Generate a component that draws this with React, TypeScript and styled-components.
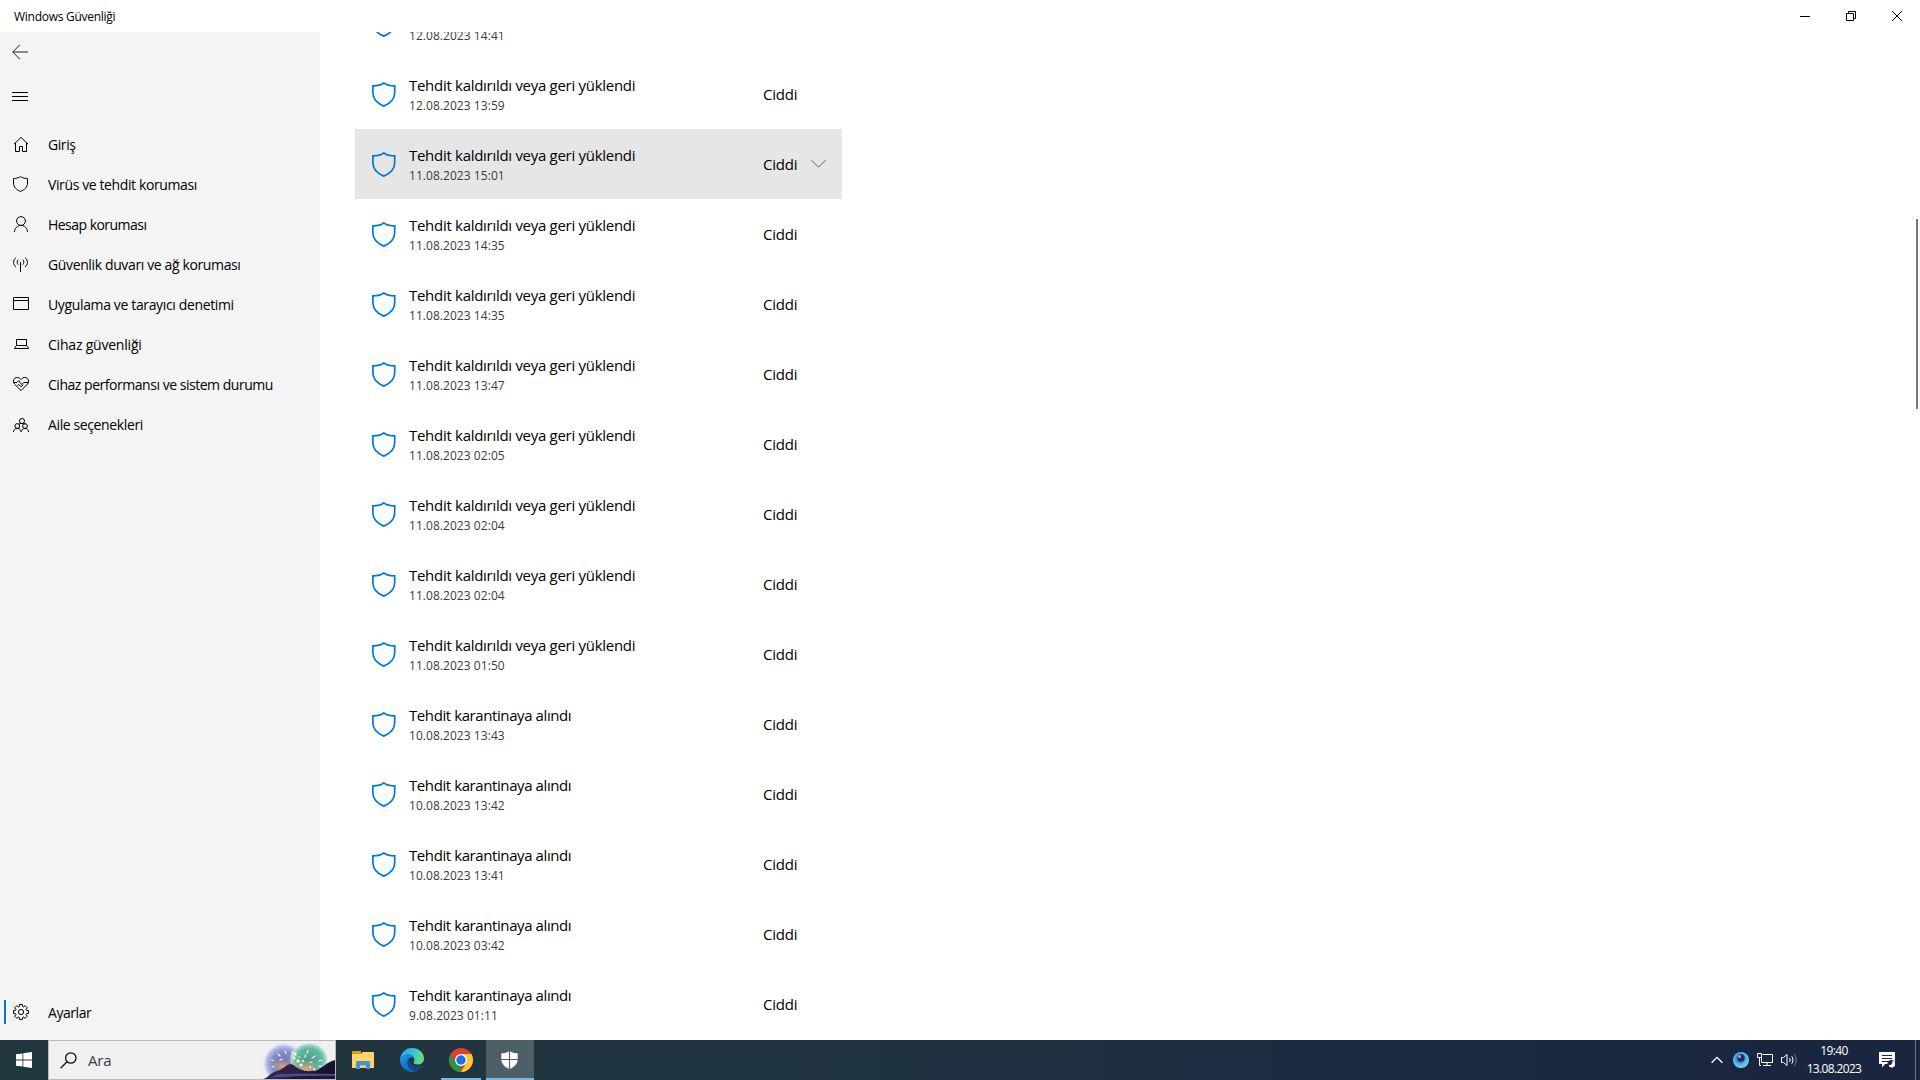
import React from "react";
import styled, { createGlobalStyle } from "styled-components";

const GlobalStyle = createGlobalStyle`
  * { box-sizing: border-box; }
  body {
    margin: 0;
    background: #fff;
    color: #000;
    font-family: "Open Sans", "Noto Sans", sans-serif;
    overflow: hidden;
  }
  svg { display: block; flex: none; }
`;

const Screen = styled.div`
  width: 1920px;
  height: 1080px;
  display: flex;
  flex-direction: column;
  background: #fff;
`;

const TitleBar = styled.header`
  height: 32px;
  flex: none;
  display: flex;
  align-items: center;
  justify-content: space-between;
  padding-left: 14px;
`;

const WindowTitle = styled.span`
  margin-top: 2px;
  font-size: 12px;
  line-height: 16px;
  letter-spacing: -0.27px;
  white-space: nowrap;
`;

const WindowButtons = styled.div`
  display: flex;
`;

const WindowButton = styled.button`
  width: 46px;
  height: 32px;
  padding: 0;
  border: 0;
  background: transparent;
  display: flex;
  align-items: center;
  justify-content: center;
`;

const Body = styled.div`
  flex: 1;
  min-height: 0;
  display: flex;
`;

const Sidebar = styled.nav`
  width: 320px;
  flex: none;
  display: flex;
  flex-direction: column;
  background: #f4f4f4;
  padding-bottom: 7px;
`;

const SidebarButton = styled.div<{ $height: number }>`
  height: ${(p) => p.$height}px;
  padding-left: 12px;
  display: flex;
  align-items: center;
`;

const NavList = styled.div`
  margin-top: 5px;
  flex: 1;
  display: flex;
  flex-direction: column;
`;

const NavRow = styled.div`
  height: 40px;
  display: flex;
  align-items: center;
`;

const NavMarker = styled.span<{ $active?: boolean }>`
  width: 2px;
  height: 24px;
  margin: 0 7px 2px 4px;
  background: ${(p) => (p.$active ? "#0078d7" : "transparent")};
`;

const NavIcon = styled.span`
  width: 16px;
  height: 16px;
  margin: 0 19px 2px 0;
`;

const NavLabel = styled.span<{ $track: number }>`
  font-size: 14px;
  line-height: 20px;
  letter-spacing: ${(p) => p.$track}px;
  white-space: nowrap;
`;

const Content = styled.main`
  flex: 1;
  min-width: 0;
  display: flex;
  justify-content: space-between;
  padding: 0 2px 0 35px;
  overflow: hidden;
`;

const ThreatList = styled.div`
  width: 487px;
  margin-top: -43px;
`;

const ThreatRow = styled.div<{ $selected: boolean }>`
  height: 70px;
  display: flex;
  align-items: center;
  padding-left: 17px;
  background: ${(p) => (p.$selected ? "#e6e6e6" : "transparent")};
`;

const ThreatText = styled.div`
  width: 354px;
  margin-left: 13px;
  display: flex;
  flex-direction: column;
`;

const ThreatTitle = styled.span<{ $track: number }>`
  font-size: 15px;
  line-height: 20px;
  letter-spacing: ${(p) => p.$track}px;
  white-space: nowrap;
`;

const ThreatDate = styled.span`
  padding-top: 3px;
  margin-bottom: -1px;
  font-size: 12px;
  line-height: 16px;
  letter-spacing: 0.05px;
  color: #3a3a3a;
  white-space: nowrap;
`;

const Severity = styled.span`
  width: 48px;
  font-size: 15px;
  line-height: 20px;
  letter-spacing: -0.2px;
`;

const ScrollThumb = styled.div`
  width: 2px;
  height: 190px;
  margin-top: 187px;
  background: #7a7a7a;
`;

const Taskbar = styled.footer`
  height: 40px;
  flex: none;
  display: flex;
  background: linear-gradient(90deg, #21373f 0%, #20343f 40%, #1b2942 75%, #1a2540 100%);
`;

const StartButton = styled.div`
  width: 48px;
  display: flex;
  align-items: center;
  justify-content: center;
`;

const SearchBox = styled.div`
  width: 288px;
  display: flex;
  align-items: center;
  background: #f0f0f0;
  border: 1px solid #b9b9b9;
  padding-left: 11px;
`;

const SearchText = styled.span`
  flex: 1;
  margin-left: 11px;
  font-size: 15px;
  line-height: 20px;
  letter-spacing: -0.2px;
  color: #3b3b3b;
`;

const Apps = styled.div`
  display: flex;
  gap: 1px;
  margin-left: 3px;
  flex: 1;
`;

const AppButton = styled.div<{ $active?: boolean }>`
  width: 48px;
  height: 40px;
  display: flex;
  flex-direction: column;
  align-items: center;
  background: ${(p) => (p.$active ? "#4d5f66" : "transparent")};
`;

const AppIcon = styled.div<{ $underlined?: boolean }>`
  flex: 1;
  display: flex;
  align-items: center;
  padding-top: ${(p) => (p.$underlined ? 2 : 0)}px;
`;

const AppUnderline = styled.div<{ $width: number }>`
  width: ${(p) => p.$width}px;
  height: 2px;
  background: #76b9ed;
`;

const Tray = styled.div`
  display: flex;
  align-items: center;
  color: #fff;
`;

const TrayItem = styled.div<{ $right: number }>`
  margin-right: ${(p) => p.$right}px;
`;

const Clock = styled.div`
  width: 60px;
  margin-right: 15px;
  display: flex;
  flex-direction: column;
  align-items: center;
  font-size: 12px;
  line-height: 18px;
  letter-spacing: -0.65px;
  white-space: nowrap;
`;

const ShowDesktop = styled.div`
  width: 5px;
  height: 40px;
  border-left: 1px solid #6b7487;
`;

const Line = ({ children }: { children: React.ReactNode }) => (
  <svg width="16" height="16" viewBox="0 0 16 16" fill="none" stroke="#000" strokeWidth="1">
    {children}
  </svg>
);

const gearPath = (() => {
  const pts: string[] = [];
  for (let i = 0; i < 8; i++) {
    const a = (i * Math.PI) / 4;
    const at = (r: number, d: number) =>
      `${(8 + r * Math.sin(a + d)).toFixed(2)} ${(8 - r * Math.cos(a + d)).toFixed(2)}`;
    pts.push(at(5.7, -0.3), at(7.6, -0.2), at(7.6, 0.2), at(5.7, 0.3));
  }
  return `M${pts.join("L")}Z`;
})();

const icons = {
  home: (
    <Line>
      <path d="M1 8.200 8 1.400l7 6.800M2.500 7v8.500h4v-5h3v5h4V7" />
    </Line>
  ),
  shield: (
    <Line>
      <path d="M7.500.600C6 1.800 3.300 2.500.500 2.500V7c0 4 3 7 7 8.400 4-1.400 7-4.400 7-8.400V2.500C11.700 2.500 9 1.800 7.500.600Z" />
    </Line>
  ),
  person: (
    <Line>
      <circle cx="8" cy="5" r="4.400" />
      <path d="M1.500 16c0-3.700 2.900-6.600 6.500-6.600s6.500 2.900 6.500 6.600" />
    </Line>
  ),
  antenna: (
    <Line>
      <path d="M7.500 6v10" />
      <path d="M5.300 3.700c-1.500 1.200-1.500 3.800 0 5M9.700 3.700c1.500 1.200 1.500 3.800 0 5M2.900 1.700c-3.100 2.400-3.100 6.800 0 9.200M12.100 1.700c3.100 2.400 3.100 6.800 0 9.200" />
    </Line>
  ),
  window: (
    <Line>
      <path d="M.500 1.500h15v12H.500zM.500 4.500h15" />
    </Line>
  ),
  laptop: (
    <Line>
      <path d="M3.500 9.500v-6h10v6zM3.500 9.500l-2 2.500v.500h14V12l-2-2.500" />
    </Line>
  ),
  heart: (
    <Line>
      <path d="M8 14.600 1.400 8C-.100 6.400.200 3.700 1.800 2.300 3.400 1 5.700 1.200 7.100 2.600l.900.900.900-.900c1.400-1.400 3.700-1.600 5.300-.300 1.600 1.400 1.900 4.100.400 5.700Z" />
      <path d="M.800 6.500H4l1.700-1.800 3 4 2-2.200h4.500M4.500 9.500l1.300-1 2.400 2.400 2-2.100" />
    </Line>
  ),
  family: (
    <Line>
      <circle cx="9" cy="5" r="2.500" />
      <path d="M5.300 8.300C6 7.800 7.400 7.500 9 7.500s2.600.300 3.300 1" />
      <circle cx="4.300" cy="10" r="2.400" />
      <circle cx="12" cy="10" r="2.400" />
      <path d="M.500 16c0-2.200 1.600-3.600 3.800-3.600S8 13.800 8 16M8.500 15.500c.200-1.900 1.600-3.100 3.500-3.100 2.100 0 3.500 1.400 3.500 3.600" />
    </Line>
  ),
  gear: (
    <Line>
      <path d={gearPath} />
      <circle cx="8" cy="8" r="2.600" />
    </Line>
  ),
};

const ThreatShield = () => (
  <svg width="24" height="25" viewBox="0 0 24 25" fill="none" stroke="#0078d7" strokeWidth="1.700">
    <path d="M11.800.900C9.500 2.900 5.500 3.900.900 3.900v6.600c0 6.500 4.600 11 10.900 13.600 6.300-2.600 10.900-7.100 10.900-13.600V3.900C18.300 3.900 14.300 2.900 11.800.900Z" />
  </svg>
);

const ExpandChevron = () => (
  <svg width="15" height="10" viewBox="0 0 15 10" fill="none" stroke="#5e5e5e">
    <path d="M.500 1.200 7.500 8.200l7-7" />
  </svg>
);

const WindowsLogo = () => (
  <svg width="16" height="16" viewBox="0 0 16 16" fill="#fff">
    <path d="M0 2.300 6.500 1.400v6.200H0zM7.300 1.300 16 0v7.600H7.300zM0 8.400h6.500v6.200L0 13.700zM7.300 8.400H16V16l-8.700-1.300z" />
  </svg>
);

const Magnifier = () => (
  <svg width="17" height="17" viewBox="0 0 17 17" fill="none" stroke="#111" strokeWidth="1.300">
    <circle cx="10.800" cy="6" r="5.200" />
    <path d="M7 9.700.600 16.200" />
  </svg>
);

const SearchArt = () => (
  <svg width="72" height="38" viewBox="0 0 72 38">
    <defs>
      <radialGradient id="violet">
        <stop offset="0" stopColor="#6a72b4" />
        <stop offset="0.550" stopColor="#7f8ccb" />
        <stop offset="0.800" stopColor="#b3bce6" />
        <stop offset="1" stopColor="#f0f0f0" stopOpacity="0" />
      </radialGradient>
      <radialGradient id="teal">
        <stop offset="0" stopColor="#4a9d90" />
        <stop offset="0.650" stopColor="#62b8a0" />
        <stop offset="0.850" stopColor="#a5dac8" />
        <stop offset="1" stopColor="#f0f0f0" stopOpacity="0" />
      </radialGradient>
      <radialGradient id="glow">
        <stop offset="0" stopColor="#e9a374" />
        <stop offset="1" stopColor="#c59470" stopOpacity="0" />
      </radialGradient>
      <linearGradient id="hill" x1="0" y1="0" x2="1" y2="0.300">
        <stop offset="0" stopColor="#3a2952" />
        <stop offset="0.600" stopColor="#2a2145" />
        <stop offset="1" stopColor="#15122a" />
      </linearGradient>
    </defs>
    <ellipse cx="21" cy="23" rx="22" ry="22" fill="url(#violet)" />
    <ellipse cx="46" cy="19" rx="20" ry="18" fill="url(#teal)" />
    <ellipse cx="43" cy="28" rx="15" ry="10" fill="url(#glow)" />
    <ellipse cx="20" cy="25" rx="13" ry="7" fill="url(#glow)" />
    <path d="M0 38c4-1 6-4 9-6 3-1 4-2 8-3 4-2 6-5 10-6 4 0 6 4 10 5 5 3 9 2 14 2 7-1 12-9 21-11v19Z" fill="url(#hill)" />
    <path d="M14 33.500c18-1.500 38-1 58-.5v2c-20-.6-40 .5-64 1.500Z" fill="#4a4d85" />
    <path d="M30 36c14-1 30-1 42-.500V38H24Z" fill="#1d1838" />
    <g stroke="#fff6e2" strokeWidth="1.200" strokeLinecap="round">
      <path d="M15 13l2 2M22 10l1 2.500M30 11l-1 1M8.500 19l2 .700M17 19l2-1M9 26l2-.500M44 12l1-2.500M42 16l.500-2M49 17l3-2M47 21l2 .500M52 29l-1.500-2M56 20l3-1M47 27l.500-2M56 25l2.500.500" />
    </g>
    <g fill="#fff4d6">
      <circle cx="32" cy="13" r="1.700" />
      <circle cx="31" cy="17" r="1.500" />
      <circle cx="35" cy="20" r="1.700" />
      <circle cx="38" cy="24" r="1.500" />
      <circle cx="40" cy="20" r="1" />
      <circle cx="29" cy="15" r="0.900" />
      <circle cx="36" cy="16" r="0.800" />
    </g>
  </svg>
);

const Explorer = () => (
  <svg width="22" height="18" viewBox="0 0 22 18">
    <path d="M0 1c0-.600.400-1 1-1h8v3H0z" fill="#e09a12" />
    <path d="M0 3h9l1.500-2H21a1 1 0 0 1 1 1v15H0z" fill="#ffd566" />
    <path d="M4 18v-6.500c0-.900.600-1.500 1.500-1.500h11c.900 0 1.500.600 1.500 1.500V18h-4v-3.500H8V18z" fill="#3f93dc" />
    <path d="M8 17v-2.500h6V17z" fill="#f6ce63" />
  </svg>
);

const Edge = () => (
  <svg width="24" height="24" viewBox="0 0 24 24">
    <defs>
      <linearGradient id="edgeTop" x1="0" y1="0.400" x2="1" y2="0.600">
        <stop offset="0" stopColor="#2fa8e8" />
        <stop offset="0.500" stopColor="#35c5d8" />
        <stop offset="1" stopColor="#6be36a" />
      </linearGradient>
      <linearGradient id="edgeLeft" x1="0" y1="0" x2="0.600" y2="1">
        <stop offset="0" stopColor="#1f9be4" />
        <stop offset="1" stopColor="#0c65b8" />
      </linearGradient>
    </defs>
    <path d="M.100 11C.700 4.800 5.800 0 12 0c7 0 12 5 12 10.500 0 3.500-2.700 6-6.200 6-2.400 0-4.300-.800-4.300-2 0-.700 1-1.300 1-3C14.500 9 12 6.500 8.500 6.500 4.500 6.500 1.500 8.500.100 11Z" fill="url(#edgeTop)" />
    <path d="M.100 11c1.200-2.600 4.300-4.600 8-4.600 3.800 0 6.400 2.500 6.400 5.100-.700-1.300-2-1.900-3.300-1.900-2.300 0-3.700 2.600-3.700 5.200 0 4.500 3.700 7.700 8 8.600A12 12 0 0 1 .100 11Z" fill="url(#edgeLeft)" />
    <path d="M9.300 11c-1.200 1-1.800 2.700-1.800 4.300 0 4.500 4.500 8.200 8.400 8 3-1 5.300-3 6.600-5.300.200-.500-.200-.800-.700-.500-5 2.600-12.500.400-12.500-6.500Z" fill="#114a8b" />
  </svg>
);

const Chrome = () => (
  <svg width="24" height="24" viewBox="0 0 24 24">
    <circle cx="12" cy="12" r="12" fill="#e33b2e" />
    <path d="M1.610 6 6.800 15l5.200 3v6A12 12 0 0 1 1.610 6Z" fill="#279847" />
    <path d="M12 6h10.390A12 12 0 0 1 12 24l5.200-9Z" fill="#fcc934" />
    <circle cx="12" cy="12" r="6" fill="#fff" />
    <circle cx="12" cy="12" r="4.700" fill="#1a73e8" />
  </svg>
);

const Defender = () => (
  <svg width="18" height="18" viewBox="0 0 18 18">
    <path d="M8.500 0C6.500 1.500 3.500 2.300.300 2.300V8c0 4.500 3.200 8 8.200 10 5-2 8.200-5.500 8.200-10V2.300C13.500 2.300 10.500 1.500 8.500 0Z" fill="#fff" />
    <path d="M8.500 0v18M0 8.500h17" stroke="#4d5f66" strokeWidth="1" />
  </svg>
);

type NavEntry = { icon: keyof typeof icons; label: string; track: number };

const navItems: NavEntry[] = [
  { icon: "home", label: "Giriş", track: -0.42 },
  { icon: "shield", label: "Virüs ve tehdit koruması", track: -0.39 },
  { icon: "person", label: "Hesap koruması", track: -0.53 },
  { icon: "antenna", label: "Güvenlik duvarı ve ağ koruması", track: -0.37 },
  { icon: "window", label: "Uygulama ve tarayıcı denetimi", track: -0.36 },
  { icon: "laptop", label: "Cihaz güvenliği", track: -0.21 },
  { icon: "heart", label: "Cihaz performansı ve sistem durumu", track: -0.47 },
  { icon: "family", label: "Aile seçenekleri", track: -0.38 },
];

const REMOVED = { title: "Tehdit kaldırıldı veya geri yüklendi", track: -0.29 };
const QUARANTINED = { title: "Tehdit karantinaya alındı", track: -0.41 };

const threats = [
  { ...REMOVED, date: "12.08.2023 14:41" },
  { ...REMOVED, date: "12.08.2023 13:59" },
  { ...REMOVED, date: "11.08.2023 15:01", selected: true },
  { ...REMOVED, date: "11.08.2023 14:35" },
  { ...REMOVED, date: "11.08.2023 14:35" },
  { ...REMOVED, date: "11.08.2023 13:47" },
  { ...REMOVED, date: "11.08.2023 02:05" },
  { ...REMOVED, date: "11.08.2023 02:04" },
  { ...REMOVED, date: "11.08.2023 02:04" },
  { ...REMOVED, date: "11.08.2023 01:50" },
  { ...QUARANTINED, date: "10.08.2023 13:43" },
  { ...QUARANTINED, date: "10.08.2023 13:42" },
  { ...QUARANTINED, date: "10.08.2023 13:41" },
  { ...QUARANTINED, date: "10.08.2023 03:42" },
  { ...QUARANTINED, date: "9.08.2023 01:11" },
];

const NavItem = ({ icon, label, track, active }: NavEntry & { active?: boolean }) => (
  <NavRow>
    <NavMarker $active={active} />
    <NavIcon>{icons[icon]}</NavIcon>
    <NavLabel $track={track}>{label}</NavLabel>
  </NavRow>
);

export default function App() {
  return (
    <Screen>
      <GlobalStyle />
      <TitleBar>
        <WindowTitle>Windows Güvenliği</WindowTitle>
        <WindowButtons>
          <WindowButton>
            <svg width="10" height="10" viewBox="0 0 10 10" stroke="#000">
              <path d="M0 5.500h10" />
            </svg>
          </WindowButton>
          <WindowButton>
            <svg width="10" height="10" viewBox="0 0 10 10" fill="none" stroke="#000">
              <path d="M.500 2.500h7v7h-7zM2.500 2.500v-2h7v7h-2" />
            </svg>
          </WindowButton>
          <WindowButton>
            <svg width="10" height="10" viewBox="0 0 10 10" stroke="#000">
              <path d="M0 0l10 10M10 0 0 10" />
            </svg>
          </WindowButton>
        </WindowButtons>
      </TitleBar>

      <Body>
        <Sidebar>
          <SidebarButton $height={40}>
            <svg width="16" height="16" viewBox="0 0 16 16" fill="none" stroke="#222">
              <path d="M7.800.800.800 8l7 7.200M.800 8H16" />
            </svg>
          </SidebarButton>
          <SidebarButton $height={48}>
            <svg width="16" height="10" viewBox="0 0 16 10" stroke="#000">
              <path d="M0 1.500h16M0 5.500h16M0 9.500h16" />
            </svg>
          </SidebarButton>
          <NavList>
            {navItems.map((item) => (
              <NavItem key={item.label} {...item} />
            ))}
          </NavList>
          <NavItem icon="gear" label="Ayarlar" track={-0.45} active />
        </Sidebar>

        <Content>
          <ThreatList>
            {threats.map((t, i) => (
              <ThreatRow key={i} $selected={!!t.selected}>
                <ThreatShield />
                <ThreatText>
                  <ThreatTitle $track={t.track}>{t.title}</ThreatTitle>
                  <ThreatDate>{t.date}</ThreatDate>
                </ThreatText>
                <Severity>Ciddi</Severity>
                {t.selected && <ExpandChevron />}
              </ThreatRow>
            ))}
          </ThreatList>
          <ScrollThumb />
        </Content>
      </Body>

      <Taskbar>
        <StartButton>
          <WindowsLogo />
        </StartButton>
        <SearchBox>
          <Magnifier />
          <SearchText>Ara</SearchText>
          <SearchArt />
        </SearchBox>
        <Apps>
          <AppButton>
            <AppIcon>
              <Explorer />
            </AppIcon>
          </AppButton>
          <AppButton>
            <AppIcon>
              <Edge />
            </AppIcon>
          </AppButton>
          <AppButton>
            <AppIcon $underlined>
              <Chrome />
            </AppIcon>
            <AppUnderline $width={40} />
          </AppButton>
          <AppButton $active>
            <AppIcon $underlined>
              <Defender />
            </AppIcon>
            <AppUnderline $width={48} />
          </AppButton>
        </Apps>
        <Tray>
          <TrayItem $right={10}>
            <svg width="12" height="8" viewBox="0 0 12 8" fill="none" stroke="#fff" strokeWidth="1.300">
              <path d="M.600 6.800 6 1.400l5.400 5.400" />
            </svg>
          </TrayItem>
          <TrayItem $right={8}>
            <svg width="16" height="16" viewBox="0 0 16 16">
              <defs>
                <radialGradient id="orb" cx="0.450" cy="0.400" r="0.600">
                  <stop offset="0.300" stopColor="#2a7fc0" />
                  <stop offset="0.600" stopColor="#4bb4ea" />
                  <stop offset="1" stopColor="#7fd3f7" />
                </radialGradient>
              </defs>
              <circle cx="8" cy="8" r="8" fill="url(#orb)" />
              <circle cx="8" cy="6" r="3.700" fill="#2a2766" />
              <circle cx="6.500" cy="4.500" r="1.500" fill="#b7a7e0" />
            </svg>
          </TrayItem>
          <TrayItem $right={8}>
            <svg width="16" height="14" viewBox="0 0 16 14" fill="none" stroke="#fff">
              <path d="M5.500 1.500h10v8h-11V5M10 9.500v3M6 12.500h8M.500.500h4v4h-4zM2.500 4.500v8H4" />
            </svg>
          </TrayItem>
          <TrayItem $right={6}>
            <svg width="17" height="14" viewBox="0 0 17 14" fill="none" stroke="#fff">
              <path d="M.500 4.500h2l3.500-3v11l-3.500-3h-2zM8.500 5c.800 1.200.800 2.800 0 4M10.700 3.200c1.700 2.200 1.700 5.400 0 7.600" />
              <path d="M13 1c2.800 3.200 2.800 8.800 0 12" stroke="#77809a" />
            </svg>
          </TrayItem>
          <Clock>
            <span>19:40</span>
            <span>13.08.2023</span>
          </Clock>
          <TrayItem $right={20}>
            <svg width="16" height="16" viewBox="0 0 16 16">
              <path d="M0 0h16v12H6l-3 3.500V12H0z" fill="#fff" />
              <path d="M3 3.500h10M3 6.500h10M3 9.500h6" stroke="#1a2642" />
              <circle cx="12.300" cy="12" r="3.900" fill="#1a2642" />
              <path d="M13.500 8.600a3.500 3.500 0 1 1-4 4.600c2.500.300 4.300-1.800 4-4.600Z" fill="#fff" />
            </svg>
          </TrayItem>
          <ShowDesktop />
        </Tray>
      </Taskbar>
    </Screen>
  );
}
